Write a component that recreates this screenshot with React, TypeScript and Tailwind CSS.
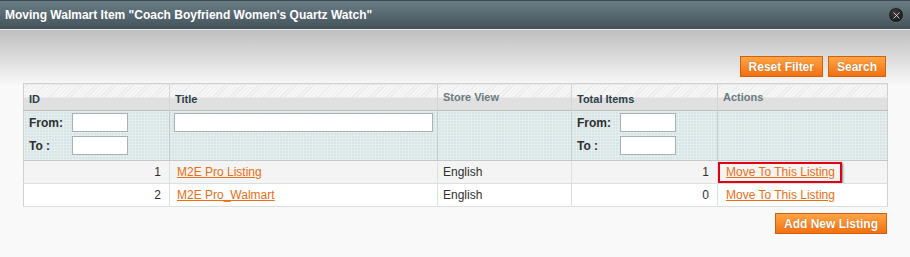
import { X } from 'lucide-react';

const rows = [
    { id: 1, title: 'M2E Pro Listing', store: 'English', total: 1, marked: true },
    { id: 2, title: 'M2E Pro_Walmart', store: 'English', total: 0, marked: false },
];

const OrangeButton = ({ label, className = '' }: { label: string; className?: string }) => (
    <button
        className={`h-[21px] border border-[#d0620f] bg-[linear-gradient(#ffa545,#f27010)] px-[8px] text-[12px] font-bold leading-none text-white [text-shadow:0_0_1px_rgba(120,50,0,0.5)] ${className}`}
    >
        {label}
    </button>
);

const RangeFilter = () => (
    <div className="flex flex-col gap-[4px] pl-[5px] pt-[2px] text-left">
        <div className="flex items-center">
            <span className="w-[43px] text-[12px] font-bold text-[#2f2f2f]">From:</span>
            <input className="h-[19px] w-[56px] border border-[#aab1b3] bg-white" />
        </div>
        <div className="flex items-center">
            <span className="w-[43px] text-[12px] font-bold text-[#2f2f2f]">To :</span>
            <input className="h-[19px] w-[56px] border border-[#aab1b3] bg-white" />
        </div>
    </div>
);

const headCell =
    'h-[27px] border-r border-[#d4d4d4] px-[5px] text-left align-middle text-[11px] font-bold bg-[linear-gradient(transparent_13px,#e0e0e0_13px),repeating-linear-gradient(135deg,#f8f8f8_0,#f8f8f8_2px,#e8e8e8_2px,#e8e8e8_3px)]';

const App = () => {
    return (
        <div className="h-[257px] w-[910px] overflow-hidden bg-[#f9f9f9] font-['Liberation_Sans',Arial,sans-serif]">
            <div className="flex h-[29px] items-center justify-between border-t border-[#3e4a50] bg-[linear-gradient(#6a7d85,#44535a)] pl-[5px] pr-[6px]">
                <h1 className="text-[12px] font-bold text-white">
                    Moving Walmart Item "Coach Boyfriend Women's Quartz Watch"
                </h1>
                <div className="flex h-[16px] w-[16px] items-center justify-center rounded-full border border-[#5c6a70] bg-[radial-gradient(circle_at_40%_35%,#3a3a3a,#0e0e0e)]">
                    <X className="h-[11px] w-[11px] text-white" strokeWidth={1.6} />
                </div>
            </div>
            <div className="h-px bg-[#e9eef0]" />

            <div className="bg-[linear-gradient(#bfbfbf,#f9f9f9_56px)] px-[23px] pt-[26px]">
                <div className="flex justify-end gap-[5px] pr-px">
                    <OrangeButton label="Reset Filter" />
                    <OrangeButton label="Search" />
                </div>

                <table className="mt-[6px] w-[864px] table-fixed border-collapse border border-[#d0d0d0]">
                    <colgroup>
                        <col className="w-[146px]" />
                        <col className="w-[268px]" />
                        <col className="w-[134px]" />
                        <col className="w-[146px]" />
                        <col className="w-[170px]" />
                    </colgroup>
                    <thead>
                        <tr className="border-b border-[#bdbdbd]">
                            <th className={`${headCell} text-[#2d3f4a]`}>
                                <span className="relative top-[2px]">ID</span>
                            </th>
                            <th className={`${headCell} text-[#2d3f4a]`}>
                                <span className="relative top-[2px]">Title</span>
                            </th>
                            <th className={`${headCell} text-[#6b7980]`}>Store View</th>
                            <th className={`${headCell} text-[#2d3f4a]`}>
                                <span className="relative top-[2px]">Total Items</span>
                            </th>
                            <th className={`${headCell} border-r-0 text-[#6b7980]`}>Actions</th>
                        </tr>
                        <tr className="h-[50px] border-b border-[#c4c8c9] bg-[#d8e5e7] bg-[linear-gradient(rgba(255,255,255,0.25)_1px,transparent_1px),linear-gradient(90deg,rgba(255,255,255,0.25)_1px,transparent_1px)] bg-[length:3px_3px]">
                            <th className="border-r border-[#c4cccd] p-0 align-top font-normal">
                                <RangeFilter />
                            </th>
                            <th className="border-r border-[#c4cccd] px-[4px] pt-[2px] align-top font-normal">
                                <input className="block h-[19px] w-full border border-[#aab1b3] bg-white" />
                            </th>
                            <th className="border-r border-[#c4cccd]" />
                            <th className="border-r border-[#c4cccd] p-0 align-top font-normal">
                                <RangeFilter />
                            </th>
                            <th />
                        </tr>
                    </thead>
                    <tbody className="text-[12px] text-[#2f2f2f]">
                        {rows.map((r, i) => (
                            <tr
                                key={r.id}
                                className={`h-[23px] border-b border-[#dadfe0] ${i % 2 === 0 ? 'bg-[#f4f4f4]' : 'bg-white'}`}
                            >
                                <td className="border-r border-[#dadfe0] pr-[8px] text-right">{r.id}</td>
                                <td className="border-r border-[#dadfe0] pl-[7px]">
                                    <a className="text-[#eb6e13] underline">{r.title}</a>
                                </td>
                                <td className="border-r border-[#dadfe0] pl-[5px]">{r.store}</td>
                                <td className="border-r border-[#dadfe0] pr-[8px] text-right">{r.total}</td>
                                <td className="p-0">
                                    <div
                                        className={`flex h-[21px] w-[124px] items-center pl-[6px] ${r.marked ? 'border-[2px] border-[#e10010] shadow-[1px_1px_2px_rgba(0,0,0,0.45)]' : 'border-[2px] border-transparent'}`}
                                    >
                                        <a className="text-[#eb6e13] underline">Move To This Listing</a>
                                    </div>
                                </td>
                            </tr>
                        ))}
                    </tbody>
                </table>

                <div className="mt-[6px] flex justify-end">
                    <OrangeButton label="Add New Listing" />
                </div>
            </div>
        </div>
    );
};

export default App;
